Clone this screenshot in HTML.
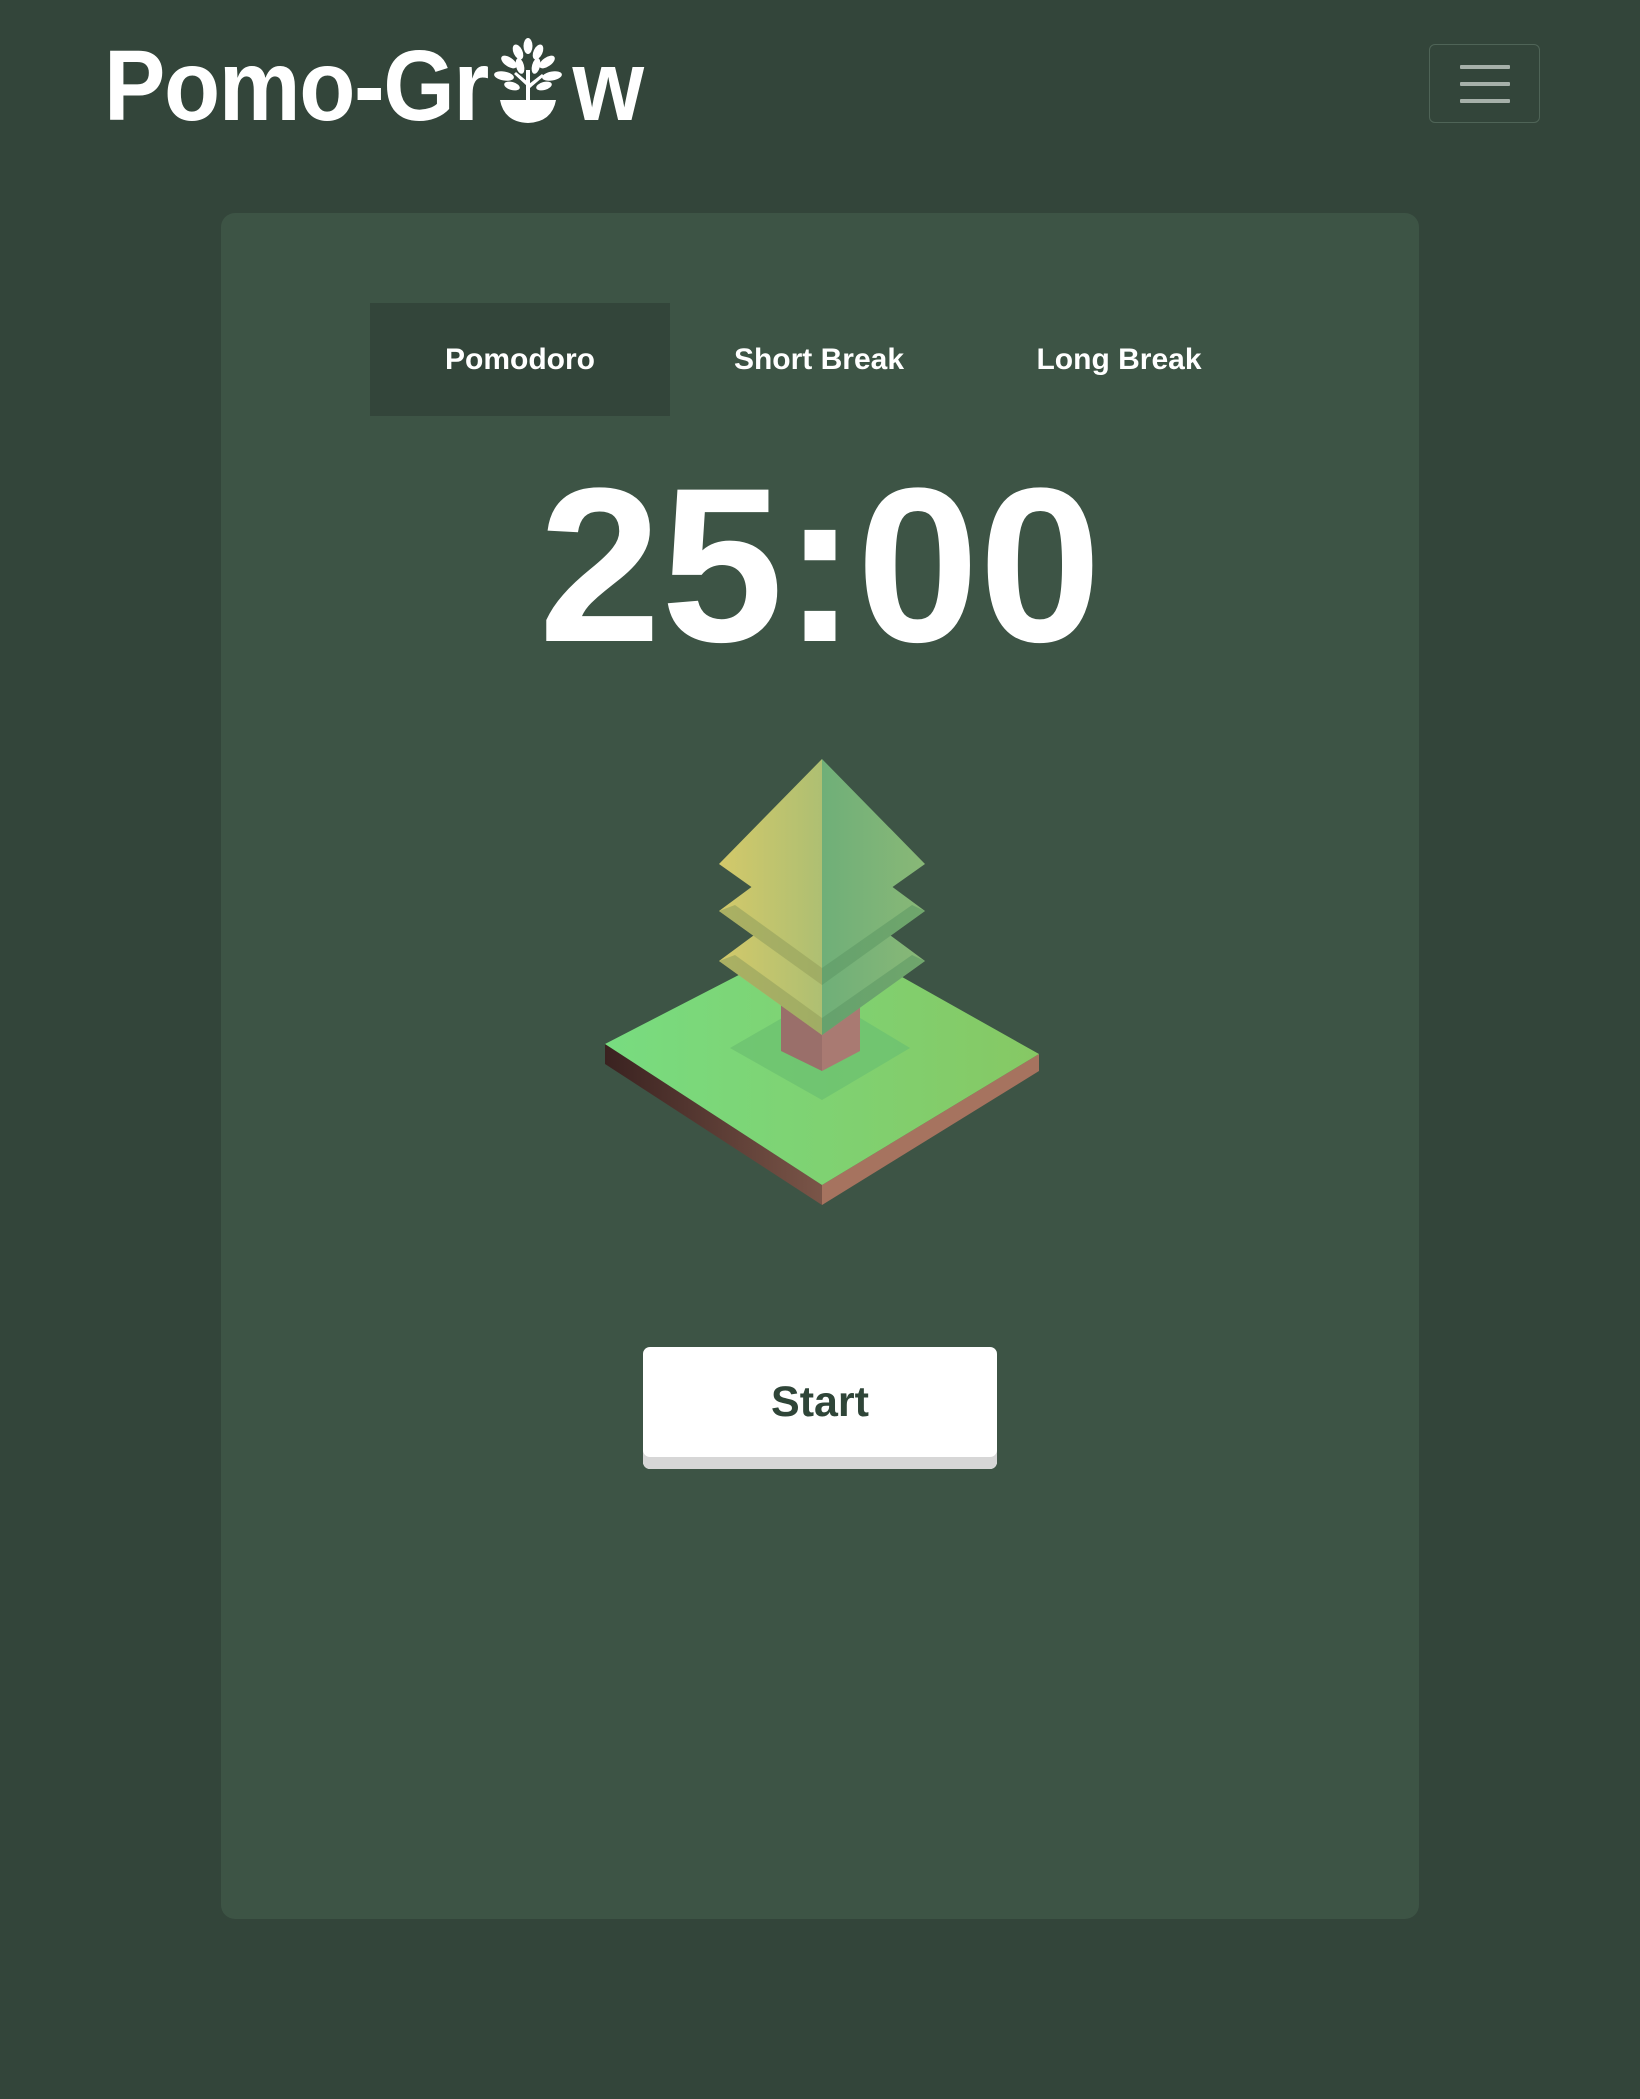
<!DOCTYPE html>
<html><head><meta charset="utf-8"><style>
*{margin:0;padding:0;box-sizing:border-box}
body{width:1640px;height:2099px;background:#33453a;position:relative;overflow:hidden;font-family:"Liberation Sans",sans-serif;color:#fff}
.logo{position:absolute;left:104px;top:36px;font-size:100px;font-weight:bold;letter-spacing:-1.5px;white-space:nowrap;line-height:1;transform:scaleX(0.92);transform-origin:0 0}
.ham{position:absolute;left:1429px;top:44px;width:111px;height:79px;border:1.5px solid #4f6457;border-radius:6px}
.ham i{position:absolute;left:30px;width:50px;height:4px;background:#a6b0a9;border-radius:1px}
.card{position:absolute;left:221px;top:213px;width:1198px;height:1706px;background:#3d5445;border-radius:14px}
.tab{position:absolute;top:303px;width:300px;height:113px;display:flex;align-items:center;justify-content:center;font-size:30px;font-weight:bold}
.timer{position:absolute;left:0;width:1640px;top:455px;text-align:center;font-size:220px;font-weight:bold;line-height:1}
.btn{position:absolute;left:643px;top:1347px;width:354px;height:122px;background:#fff;border-radius:7px;box-shadow:0 -12px 0 #d6d6d6 inset;display:flex;align-items:center;justify-content:center;padding-bottom:12px;font-size:43px;font-weight:bold;color:#2f4538}
</style></head><body>
<div class="logo">Pomo-Gr<span style="display:inline-block;width:92px"></span>w</div>
<svg style="position:absolute;left:492px;top:38px" width="72" height="86" viewBox="0 0 72 86">
<g fill="#fff">
<path d="M8 62 H64 Q60 84 36 85 Q12 84 8 62Z"/>
<path d="M34 64 L34 32 L38 32 L38 64Z"/>
<path d="M35 48 L22 36 L24 34 L36 44Z M37 46 L50 36 L52 38 L38 50Z"/>
<ellipse cx="36" cy="8" rx="4.5" ry="8"/>
<ellipse cx="26" cy="14" rx="4.5" ry="8" transform="rotate(-25 26 14)"/>
<ellipse cx="46" cy="14" rx="4.5" ry="8" transform="rotate(25 46 14)"/>
<ellipse cx="17" cy="24" rx="4.5" ry="9" transform="rotate(-55 17 24)"/>
<ellipse cx="55" cy="24" rx="4.5" ry="9" transform="rotate(55 55 24)"/>
<ellipse cx="12" cy="38" rx="4.5" ry="10" transform="rotate(-80 12 38)"/>
<ellipse cx="60" cy="38" rx="4.5" ry="10" transform="rotate(80 60 38)"/>
<ellipse cx="28" cy="28" rx="4" ry="8" transform="rotate(-15 28 28)"/>
<ellipse cx="44" cy="28" rx="4" ry="8" transform="rotate(15 44 28)"/>
<ellipse cx="20" cy="48" rx="4" ry="8" transform="rotate(-75 20 48)"/>
<ellipse cx="52" cy="48" rx="4" ry="8" transform="rotate(75 52 48)"/>
</g></svg>
<div class="ham"><i style="top:20px"></i><i style="top:37px"></i><i style="top:54px"></i></div>
<div class="card"></div>
<div class="tab" style="left:370px;background:#33453a">Pomodoro</div>
<div class="tab" style="left:669px">Short Break</div>
<div class="tab" style="left:969px">Long Break</div>
<div class="timer">25:00</div>
<svg style="position:absolute;left:0;top:0" width="1640" height="2099">
<defs>
<linearGradient id="gl" x1="0" x2="1"><stop offset="0" stop-color="#d3c96a"/><stop offset="1" stop-color="#aebf72"/></linearGradient>
<linearGradient id="gr" x1="0" x2="1"><stop offset="0" stop-color="#6faf78"/><stop offset="1" stop-color="#89b877"/></linearGradient>
<linearGradient id="gg" x1="0" x2="1"><stop offset="0" stop-color="#78dc80"/><stop offset="1" stop-color="#86c864"/></linearGradient>
<linearGradient id="dl" x1="0" x2="1"><stop offset="0" stop-color="#3a2220"/><stop offset="1" stop-color="#7a5548"/></linearGradient>
</defs>
<path d="M605 1044 L605 1064 L822 1205 L822 1185Z" fill="url(#dl)"/>
<path d="M822 1205 L1039 1071 L1039 1054 L822 1185Z" fill="#a6735f"/>
<path d="M605 1044 L822 932 L1039 1054 L822 1185Z" fill="url(#gg)"/>
<path d="M730 1048 L822 995 L910 1048 L822 1100Z" fill="#6dc270" opacity=".8"/>
<path d="M781 1000 L822 1020 L822 1071 L781 1051Z" fill="#9a6f6a"/>
<path d="M822 1020 L860 1000 L860 1051 L822 1071Z" fill="#a97a72"/>
<path d="M822 885 L719 961 L822 1035Z" fill="url(#gl)"/>
<path d="M822 885 L925 961 L822 1035Z" fill="url(#gr)"/>
<path d="M719 961 L822 1035 L822 1018 L735 955Z" fill="#9aa560" opacity=".7"/>
<path d="M822 1035 L925 961 L912 955 L822 1018Z" fill="#5f9a66" opacity=".6"/>
<path d="M822 835 L719 911 L822 985Z" fill="url(#gl)"/>
<path d="M822 835 L925 911 L822 985Z" fill="url(#gr)"/>
<path d="M719 911 L822 985 L822 968 L735 905Z" fill="#9aa560" opacity=".7"/>
<path d="M822 985 L925 911 L912 905 L822 968Z" fill="#5f9a66" opacity=".6"/>
<path d="M822 759 L719 864 L822 937Z" fill="url(#gl)"/>
<path d="M822 759 L925 864 L822 937Z" fill="url(#gr)"/>
</svg>
<div class="btn">Start</div>
</body></html>
